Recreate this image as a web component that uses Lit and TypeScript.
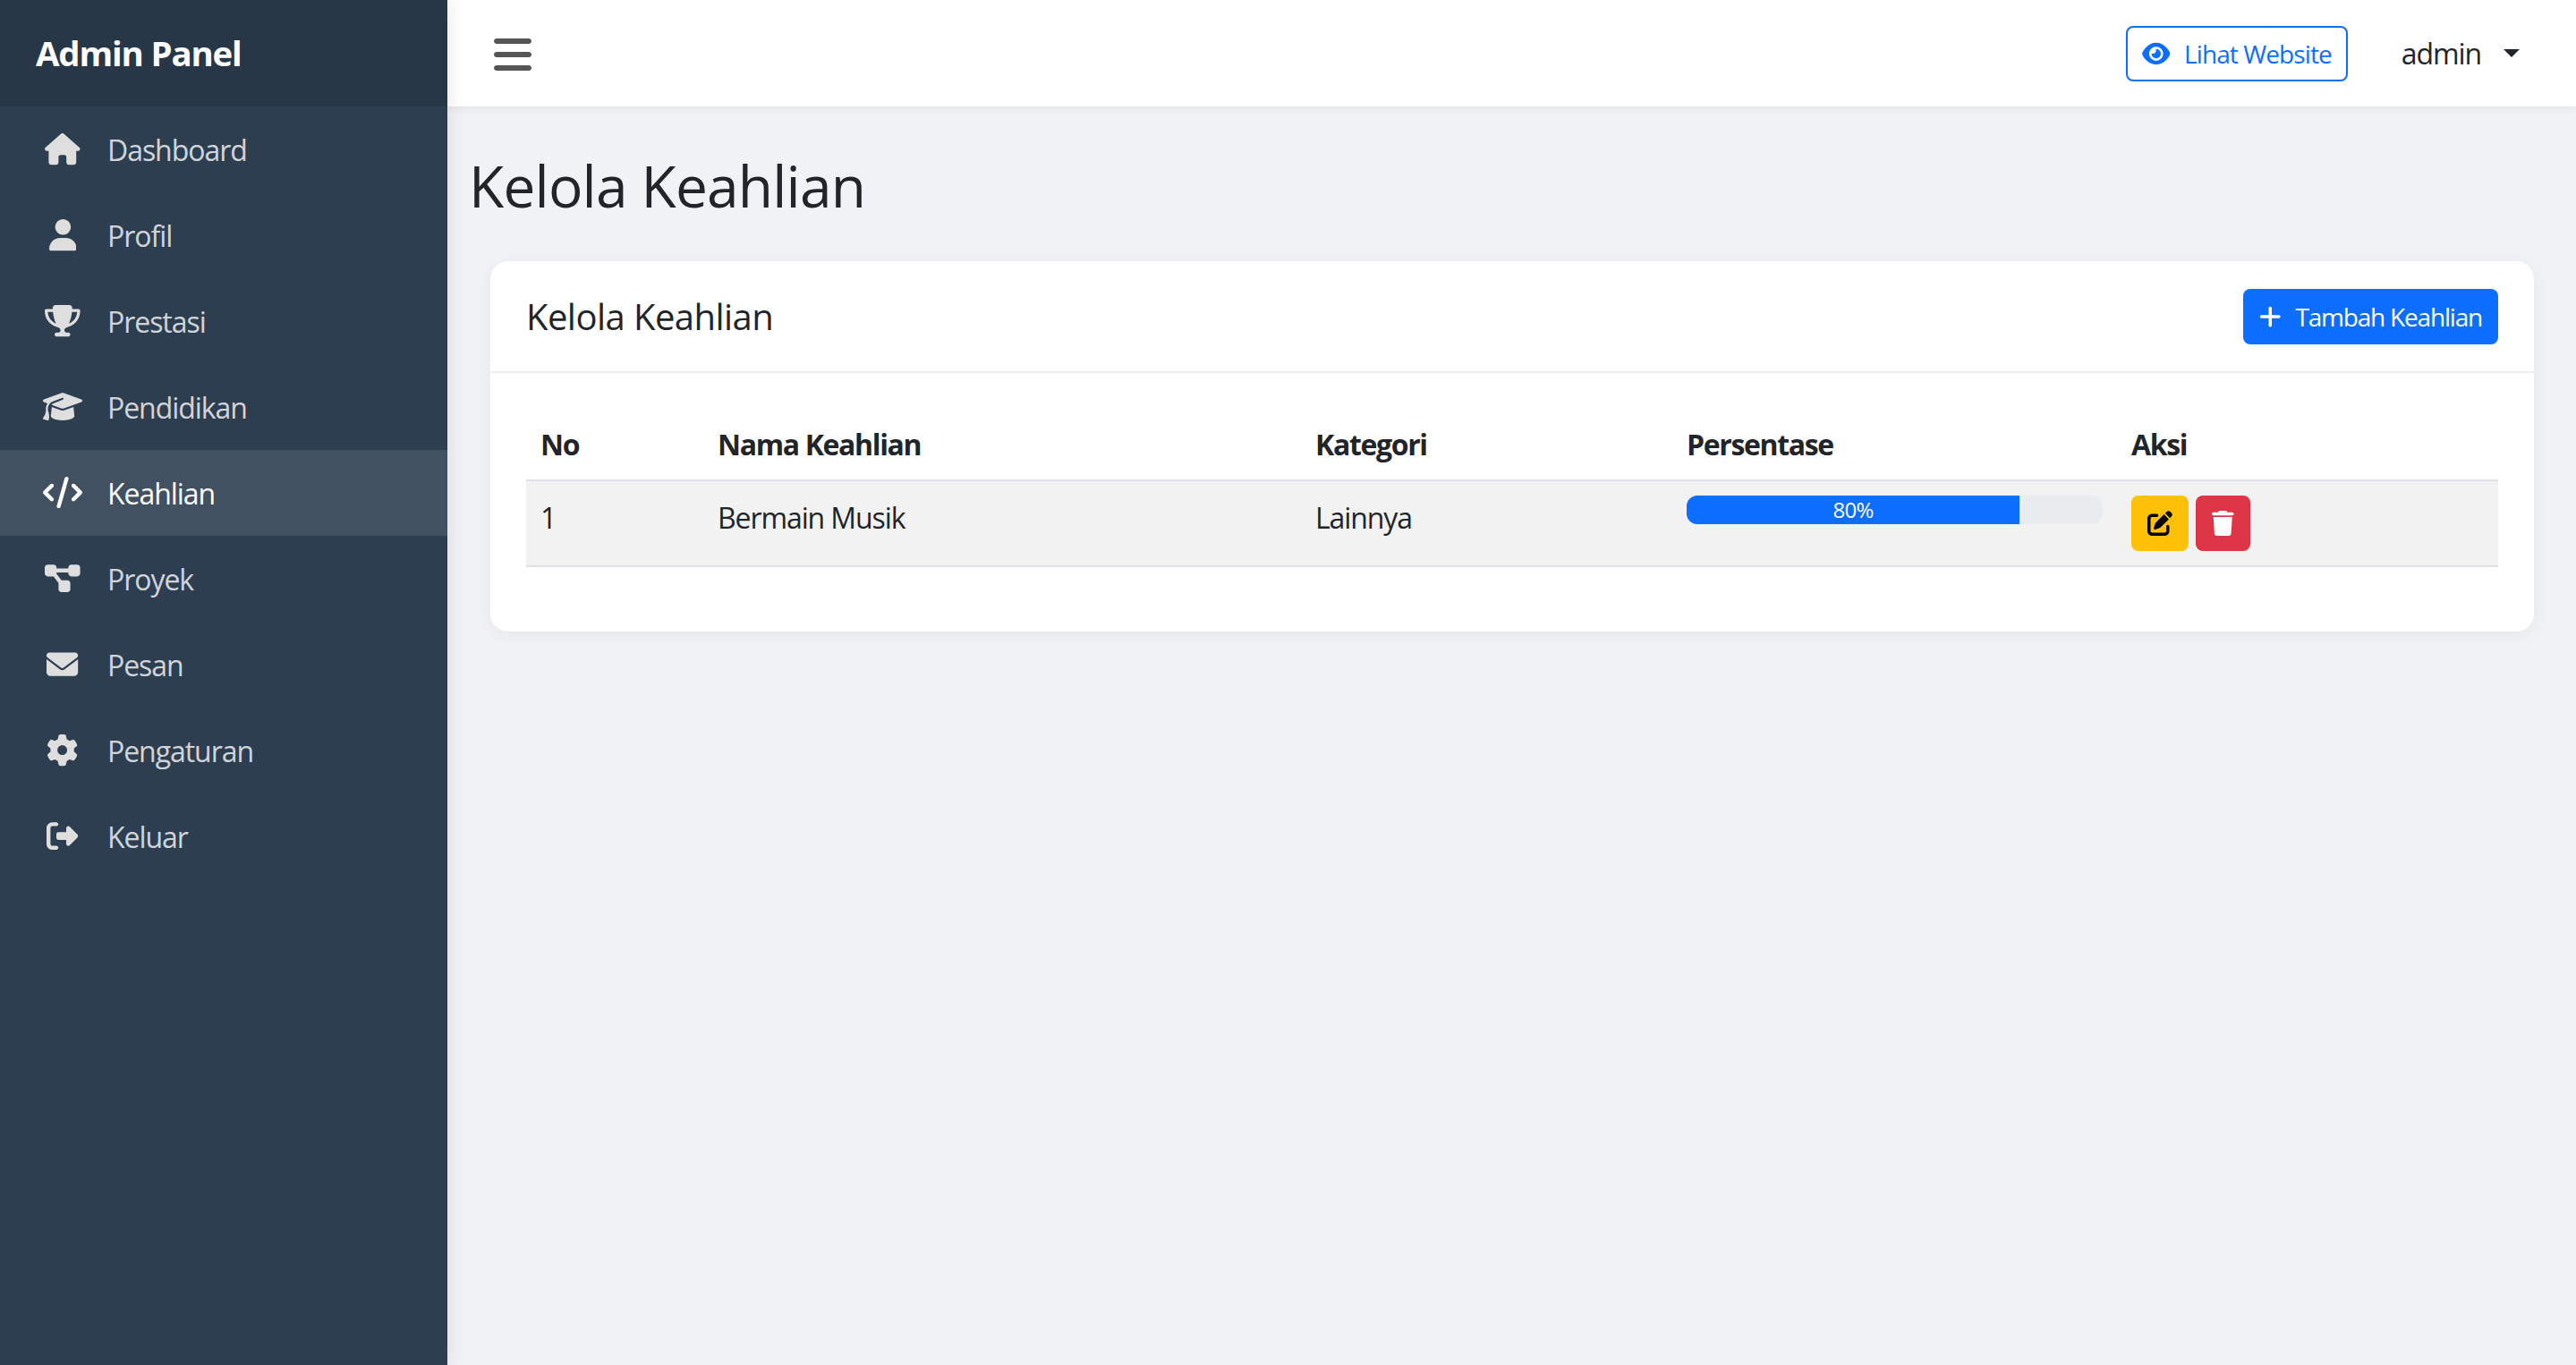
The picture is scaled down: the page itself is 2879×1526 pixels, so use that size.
import { LitElement, html, css, svg } from "lit";
import { customElement } from "lit/decorators.js";

const P: Record<string, [number, string]> = {
  house: [576, "M575.8 255.5c0 18-15 32.1-32 32.1h-32l.7 160.2c0 2.7-.2 5.4-.5 8.1V472c0 22.1-17.9 40-40 40H456c-1.1 0-2.2 0-3.3-.1c-1.4.1-2.8.1-4.2.1H416 392c-22.1 0-40-17.9-40-40V448 384c0-17.7-14.3-32-32-32H256c-17.7 0-32 14.3-32 32v64 24c0 22.1-17.9 40-40 40H160 128.1c-1.5 0-3-.1-4.5-.2c-1.2.1-2.4.2-3.6.2H104c-22.1 0-40-17.9-40-40V360c0-1.1 0-2.3.1-3.4V287.6H32c-18 0-32-14-32-32.1c0-9 3-17 10-24L266.4 8c7-7 15-8 22-8s15 2 21 7L564.8 231.5c8 7 12 15 11 24z"],
  user: [448, "M224 256A128 128 0 1 0 224 0a128 128 0 1 0 0 256zm-45.7 48C79.8 304 0 383.8 0 482.3C0 498.7 13.3 512 29.7 512H418.3c16.4 0 29.7-13.3 29.7-29.7C448 383.8 368.2 304 269.7 304H178.3z"],
  trophy: [576, "M400 0H176c-26.5 0-48.1 21.8-47.1 48.2c.2 5.3 .4 10.6 .7 15.8H24C10.7 64 0 74.7 0 88c0 92.6 33.5 157 78.5 200.7c44.3 43.1 98.3 64.8 138.1 75.8c23.4 6.5 39.4 26 39.4 45.6c0 20.9-17 37.9-37.9 37.9H192c-17.7 0-32 14.3-32 32s14.3 32 32 32H384c17.7 0 32-14.3 32-32s-14.3-32-32-32H357.9C337 448 320 431 320 410.1c0-19.6 15.9-39.2 39.4-45.6c39.9-11 93.9-32.7 138.2-75.8C542.5 245 576 180.6 576 88c0-13.3-10.7-24-24-24H446.4c.3-5.2 .5-10.4 .7-15.8C448.1 21.8 426.5 0 400 0zM48.9 112h84.4c9.1 90.1 29.2 150.3 51.9 190.6c-24.9-11-50.8-26.5-73.2-48.3c-32-31.1-58-76-63-142.3zM464.1 254.3c-22.4 21.8-48.3 37.3-73.2 48.3c22.7-40.3 42.8-100.5 51.9-190.6h84.4c-5.1 66.3-31.1 111.2-63 142.3z"],
  cap: [640, "M320 32c-8.1 0-16.1 1.4-23.7 4.1L15.8 137.4C6.3 140.9 0 149.9 0 160s6.3 19.1 15.8 22.6l57.9 20.9C57.3 229.3 48 259.8 48 291.9v28.1c0 28.4-10.8 57.7-22.3 80.8c-6.5 13-13.9 25.8-22.5 37.6C0 442.7-.9 448.3 .9 453.4s6 8.9 11.2 10.2l64 16c4.2 1.1 8.7 .3 12.4-2s6.3-6.1 7.1-10.4c8.6-42.8 4.3-81.2-2.1-108.7C90.3 344.3 86 329.8 80 316.5V291.9c0-30.2 10.2-58.7 27.9-81.5c12.9-15.5 29.6-28 49.2-35.7l157-61.7c8.2-3.2 17.5 .8 20.7 9s-.8 17.5-9 20.7l-157 61.7c-12.4 4.9-23.3 12.4-32.2 21.6l159.6 57.6c7.6 2.7 15.6 4.1 23.7 4.1s16.1-1.4 23.7-4.1L624.2 182.6c9.5-3.4 15.8-12.5 15.8-22.6s-6.3-19.1-15.8-22.6L343.7 36.1C336.1 33.4 328.1 32 320 32zM128 408c0 35.3 86 72 192 72s192-36.7 192-72L496.7 262.6 354.5 314c-11.1 4-22.8 6-34.5 6s-23.5-2-34.5-6L143.3 262.6 128 408z"],
  code: [640, "M392.8 1.2c-17-4.9-34.7 5-39.6 22l-128 448c-4.9 17 5 34.7 22 39.6s34.7-5 39.6-22l128-448c4.9-17-5-34.7-22-39.6zm80.6 120.1c-12.5 12.5-12.5 32.8 0 45.3L562.7 256l-89.4 89.4c-12.5 12.5-12.5 32.8 0 45.3s32.8 12.5 45.3 0l112-112c12.5-12.5 12.5-32.8 0-45.3l-112-112c-12.5-12.5-32.8-12.5-45.3 0zm-306.7 0c-12.5-12.5-32.8-12.5-45.3 0l-112 112c-12.5 12.5-12.5 32.8 0 45.3l112 112c12.5 12.5 32.8 12.5 45.3 0s12.5-32.8 0-45.3L77.3 256l89.4-89.4c12.5-12.5 12.5-32.8 0-45.3z"],
  diagram: [576, "M0 80C0 53.5 21.5 32 48 32h96c26.5 0 48 21.5 48 48V96H384V80c0-26.5 21.5-48 48-48h96c26.5 0 48 21.5 48 48v96c0 26.5-21.5 48-48 48H432c-26.5 0-48-21.5-48-48V160H192v16c0 1.7-.1 3.4-.3 5L272 288h96c26.5 0 48 21.5 48 48v96c0 26.5-21.5 48-48 48H272c-26.5 0-48-21.5-48-48V336c0-1.7 .1-3.4 .3-5L144 224H48c-26.5 0-48-21.5-48-48V80z"],
  envelope: [512, "M48 64C21.5 64 0 85.5 0 112c0 15.1 7.1 29.3 19.2 38.4L236.8 313.6c11.4 8.5 27 8.5 38.4 0L492.8 150.4c12.1-9.1 19.2-23.3 19.2-38.4c0-26.5-21.5-48-48-48H48zM0 176V384c0 35.3 28.7 64 64 64H448c35.3 0 64-28.7 64-64V176L294.4 339.2c-22.8 17.1-54 17.1-76.8 0L0 176z"],
  gear: [512, "M495.9 166.6c3.2 8.7 .5 18.4-6.4 24.6l-43.3 39.4c1.1 8.3 1.7 16.8 1.7 25.4s-.6 17.1-1.7 25.4l43.3 39.4c6.9 6.2 9.6 15.9 6.4 24.6c-4.4 11.9-9.7 23.3-15.8 34.3l-4.7 8.1c-6.6 11-14 21.4-22.1 31.2c-5.9 7.2-15.7 9.6-24.5 6.8l-55.7-17.7c-13.4 10.3-28.2 18.9-44 25.4l-12.5 57.1c-2 9.1-9 16.3-18.2 17.8c-13.8 2.3-28 3.5-42.5 3.5s-28.7-1.2-42.5-3.5c-9.2-1.5-16.2-8.7-18.2-17.8l-12.5-57.1c-15.8-6.5-30.6-15.1-44-25.4L83.1 425.9c-8.8 2.8-18.6 .3-24.5-6.8c-8.1-9.8-15.5-20.2-22.1-31.2l-4.7-8.1c-6.1-11-11.4-22.4-15.8-34.3c-3.2-8.7-.5-18.4 6.4-24.6l43.3-39.4C64.6 273.1 64 264.6 64 256s.6-17.1 1.7-25.4L22.4 191.2c-6.9-6.2-9.6-15.9-6.4-24.6c4.4-11.9 9.7-23.3 15.8-34.3l4.7-8.1c6.6-11 14-21.4 22.1-31.2c5.9-7.2 15.7-9.6 24.5-6.8l55.7 17.7c13.4-10.3 28.2-18.9 44-25.4l12.5-57.1c2-9.1 9-16.3 18.2-17.8C227.3 1.2 241.5 0 256 0s28.7 1.2 42.5 3.5c9.2 1.5 16.2 8.7 18.2 17.8l12.5 57.1c15.8 6.5 30.6 15.1 44 25.4l55.7-17.7c8.8-2.8 18.6-.3 24.5 6.8c8.1 9.8 15.5 20.2 22.1 31.2l4.7 8.1c6.1 11 11.4 22.4 15.8 34.3zM256 336a80 80 0 1 0 0-160 80 80 0 1 0 0 160z"],
  logout: [512, "M377.9 105.9L500.7 228.7c7.2 7.2 11.3 17.1 11.3 27.3s-4.1 20.1-11.3 27.3L377.9 406.1c-6.4 6.4-15 9.9-24 9.9c-18.7 0-33.9-15.2-33.9-33.9l0-62.1-128 0c-17.7 0-32-14.3-32-32l0-64c0-17.7 14.3-32 32-32l128 0 0-62.1c0-18.7 15.2-33.9 33.9-33.9c9 0 17.6 3.6 24 9.9zM160 96L96 96c-17.7 0-32 14.3-32 32l0 256c0 17.7 14.3 32 32 32l64 0c17.7 0 32 14.3 32 32s-14.3 32-32 32l-64 0c-53 0-96-43-96-96L0 128C0 75 43 32 96 32l64 0c17.7 0 32 14.3 32 32s-14.3 32-32 32z"],
  bars: [448, "M0 96C0 78.3 14.3 64 32 64H416c17.7 0 32 14.3 32 32s-14.3 32-32 32H32C14.3 128 0 113.7 0 96zM0 256c0-17.7 14.3-32 32-32H416c17.7 0 32 14.3 32 32s-14.3 32-32 32H32c-17.7 0-32-14.3-32-32zM448 416c0 17.7-14.3 32-32 32H32c-17.7 0-32-14.3-32-32s14.3-32 32-32H416c17.7 0 32 14.3 32 32z"],
  eye: [576, "M288 32c-80.8 0-145.5 36.8-192.6 80.6C48.6 156 17.3 208 2.5 243.7c-3.3 7.9-3.3 16.7 0 24.6C17.3 304 48.6 356 95.4 399.4C142.5 443.2 207.2 480 288 480s145.5-36.8 192.6-80.6c46.8-43.5 78.1-95.4 93-131.1c3.3-7.9 3.3-16.7 0-24.6c-14.9-35.7-46.2-87.7-93-131.1C433.5 68.8 368.8 32 288 32zM144 256a144 144 0 1 1 288 0 144 144 0 1 1 -288 0zm144-64c0 35.3-28.7 64-64 64c-7.1 0-13.9-1.2-20.3-3.3c-5.5-1.8-11.9 1.6-11.7 7.4c.3 6.9 1.3 13.8 3.2 20.7c13.7 51.2 66.4 81.6 117.6 67.9s81.6-66.4 67.9-117.6c-11.1-41.5-47.8-69.4-88.6-71.1c-5.8-.2-9.2 6.1-7.4 11.7c2.1 6.4 3.3 13.2 3.3 20.3z"],
  plus: [448, "M256 80c0-17.7-14.3-32-32-32s-32 14.3-32 32V224H48c-17.7 0-32 14.3-32 32s14.3 32 32 32H192V432c0 17.7 14.3 32 32 32s32-14.3 32-32V288H400c17.7 0 32-14.3 32-32s-14.3-32-32-32H256V80z"],
  edit: [512, "M471.6 21.7c-21.9-21.9-57.3-21.9-79.2 0L362.3 51.7l97.9 97.9 30.1-30.1c21.9-21.9 21.9-57.3 0-79.2L471.6 21.7zm-299.2 220c-6.1 6.1-10.8 13.6-13.5 21.9l-29.6 88.8c-2.9 8.6-.6 18.1 5.8 24.6s15.9 8.7 24.6 5.8l88.8-29.6c8.2-2.7 15.7-7.4 21.9-13.5L437.7 172.3 339.7 74.3 172.4 241.7zM96 64C43 64 0 107 0 160V416c0 53 43 96 96 96H352c53 0 96-43 96-96V320c0-17.7-14.3-32-32-32s-32 14.3-32 32v96c0 17.7-14.3 32-32 32H96c-17.7 0-32-14.3-32-32V160c0-17.7 14.3-32 32-32h96c17.7 0 32-14.3 32-32s-14.3-32-32-32H96z"],
  trash: [448, "M135.2 17.7L128 32H32C14.3 32 0 46.3 0 64S14.3 96 32 96H416c17.7 0 32-14.3 32-32s-14.3-32-32-32H320l-7.2-14.3C307.4 6.8 296.3 0 284.2 0H163.8c-12.1 0-23.2 6.8-28.6 17.7zM416 128H32L53.2 467c1.6 25.3 22.6 45 47.9 45H346.9c25.3 0 46.3-19.7 47.9-45L416 128z"],
};

function icon(name: string, size: number) {
  const [w, d] = P[name];
  return html`<svg class="ic" width=${(size * w) / 512} height=${size} viewBox="0 0 ${w} 512">${svg`<path d=${d}></path>`}</svg>`;
}

const NAV: [string, string][] = [
  ["house", "Dashboard"],
  ["user", "Profil"],
  ["trophy", "Prestasi"],
  ["cap", "Pendidikan"],
  ["code", "Keahlian"],
  ["diagram", "Proyek"],
  ["envelope", "Pesan"],
  ["gear", "Pengaturan"],
  ["logout", "Keluar"],
];

@customElement("app-root")
export class AppRoot extends LitElement {
  static styles = css`
    :host {
      display: block;
      font-family: "Open Sans", "Noto Sans", sans-serif;
      color: #212529;
    }
    * { box-sizing: border-box; }
    .ic { display: block; fill: currentColor; flex: none; }
    .app { display: flex; min-height: 1526px; background: #f0f2f5; }
    .side {
      width: 500px;
      flex: none;
      background: #2c3e50;
      color: #fff;
      box-shadow: 0 0 20px rgba(0, 0, 0, 0.1);
      position: relative;
      z-index: 1;
    }
    .brand {
      height: 119px;
      background: rgba(0, 0, 0, 0.1);
      padding: 0 0 1px 40px;
      display: flex;
      align-items: center;
      font-size: 38.4px;
      font-weight: 700;
      letter-spacing: -1.15px;
    }
    .item {
      height: 96px;
      display: flex;
      align-items: center;
      color: rgba(255, 255, 255, 0.8);
      font-size: 32px;
      line-height: 48px;
      letter-spacing: -1.05px;
    }
    .item.on { background: rgba(255, 255, 255, 0.1); color: #fff; }
    .slot { width: 120px; padding-left: 20px; display: flex; justify-content: center; flex: none; }
    .label { padding-top: 2px; }
    .item svg { color: #dedede; }
    .item.on svg { color: #fff; }
    .main { flex: 1; min-width: 0; }
    .top {
      height: 119px;
      background: #fff;
      box-shadow: 0 4px 8px rgba(0, 0, 0, 0.05);
      display: flex;
      align-items: center;
      padding: 0 63px 0 52px;
      color: #555;
    }
    .top > .ic { margin-top: 2px; }
    .grow { flex: 1; }
    .btn {
      display: inline-flex;
      align-items: center;
      height: 62px;
      padding: 0 16px;
      border: 2px solid transparent;
      border-radius: 8px;
      font-size: 28px;
      letter-spacing: -0.9px;
      gap: 16px;
      white-space: nowrap;
    }
    .outline { border-color: #0d6efd; color: #0d6efd; background: #fff; }
    .user {
      display: flex;
      align-items: center;
      margin-left: 60px;
      font-size: 32px;
      letter-spacing: -1.1px;
      color: #212529;
    }
    .caret {
      margin-left: 25px;
      width: 0;
      height: 0;
      border-top: 9.6px solid #212529;
      border-left: 9.6px solid transparent;
      border-right: 9.6px solid transparent;
    }
    h1 {
      margin: 50px 0 46px 24px;
      font-size: 64px;
      line-height: 77px;
      font-weight: 500;
      letter-spacing: -0.8px;
    }
    .card {
      margin: 0 47px 0 48px;
      background: #fff;
      border-radius: 20px;
      box-shadow: 0 4px 20px rgba(0, 0, 0, 0.05);
    }
    .head {
      height: 125px;
      padding: 0 40px;
      display: flex;
      align-items: center;
      justify-content: space-between;
      border-bottom: 2px solid #eceef0;
    }
    h5 { margin: 0; font-size: 40px; font-weight: 500; letter-spacing: -0.55px; }
    .primary { background: #0d6efd; color: #fff; letter-spacing: -1.2px; }
    .bodyc { padding: 39px 40px 72px; }
    table { width: 2204px; table-layout: fixed; border-collapse: collapse; font-size: 32px; line-height: 48px; letter-spacing: -1.1px; }
    th, td { padding: 16px; text-align: left; vertical-align: top; }
    th { font-weight: 700; border-bottom: 2px solid #dee2e6; letter-spacing: -1.35px; padding: 17px 16px 15px; }
    td { background: #f2f2f2; border-bottom: 2px solid #dee2e6; }
    td.txt { padding: 17px 16px 15px; }
    .c1 { width: 198px; } .c2 { width: 668px; } .c3 { width: 415px; } .c4 { width: 497px; } .c5 { width: 426px; }
    .track { height: 32px; background: #e9ecef; border-radius: 12px; overflow: hidden; display: flex; }
    .fill { width: 80%; background: #0d6efd; color: #fff; font-size: 24px; line-height: 32px; text-align: center; letter-spacing: -0.8px; }
    .acts { display: flex; gap: 8px; }
    .warn { background: #ffc107; color: #000; }
    .danger { background: #dc3545; color: #fff; }
  `;

  render() {
    return html`<div class="app">
      <aside class="side">
        <div class="brand">Admin Panel</div>
        <nav>
          ${NAV.map(
            ([ic, label]) => html`<div class="item ${label === "Keahlian" ? "on" : ""}">
              <span class="slot">${icon(ic, 35.2)}</span><span class="label">${label}</span>
            </div>`,
          )}
        </nav>
      </aside>
      <main class="main">
        <header class="top">
          ${icon("bars", 48)}
          <span class="grow"></span>
          <span class="btn outline">${icon("eye", 28)}Lihat Website</span>
          <span class="user">admin<span class="caret"></span></span>
        </header>
        <h1>Kelola Keahlian</h1>
        <section class="card">
          <div class="head">
            <h5>Kelola Keahlian</h5>
            <span class="btn primary">${icon("plus", 28)}Tambah Keahlian</span>
          </div>
          <div class="bodyc">
            <table>
              <thead>
                <tr>
                  <th class="c1">No</th><th class="c2">Nama Keahlian</th><th class="c3">Kategori</th><th class="c4">Persentase</th><th class="c5">Aksi</th>
                </tr>
              </thead>
              <tbody>
                <tr>
                  <td class="txt">1</td><td class="txt">Bermain Musik</td><td class="txt">Lainnya</td>
                  <td><div class="track"><div class="fill">80%</div></div></td>
                  <td><div class="acts"><span class="btn warn">${icon("edit", 28)}</span><span class="btn danger">${icon("trash", 28)}</span></div></td>
                </tr>
              </tbody>
            </table>
          </div>
        </section>
      </main>
    </div>`;
  }
}
